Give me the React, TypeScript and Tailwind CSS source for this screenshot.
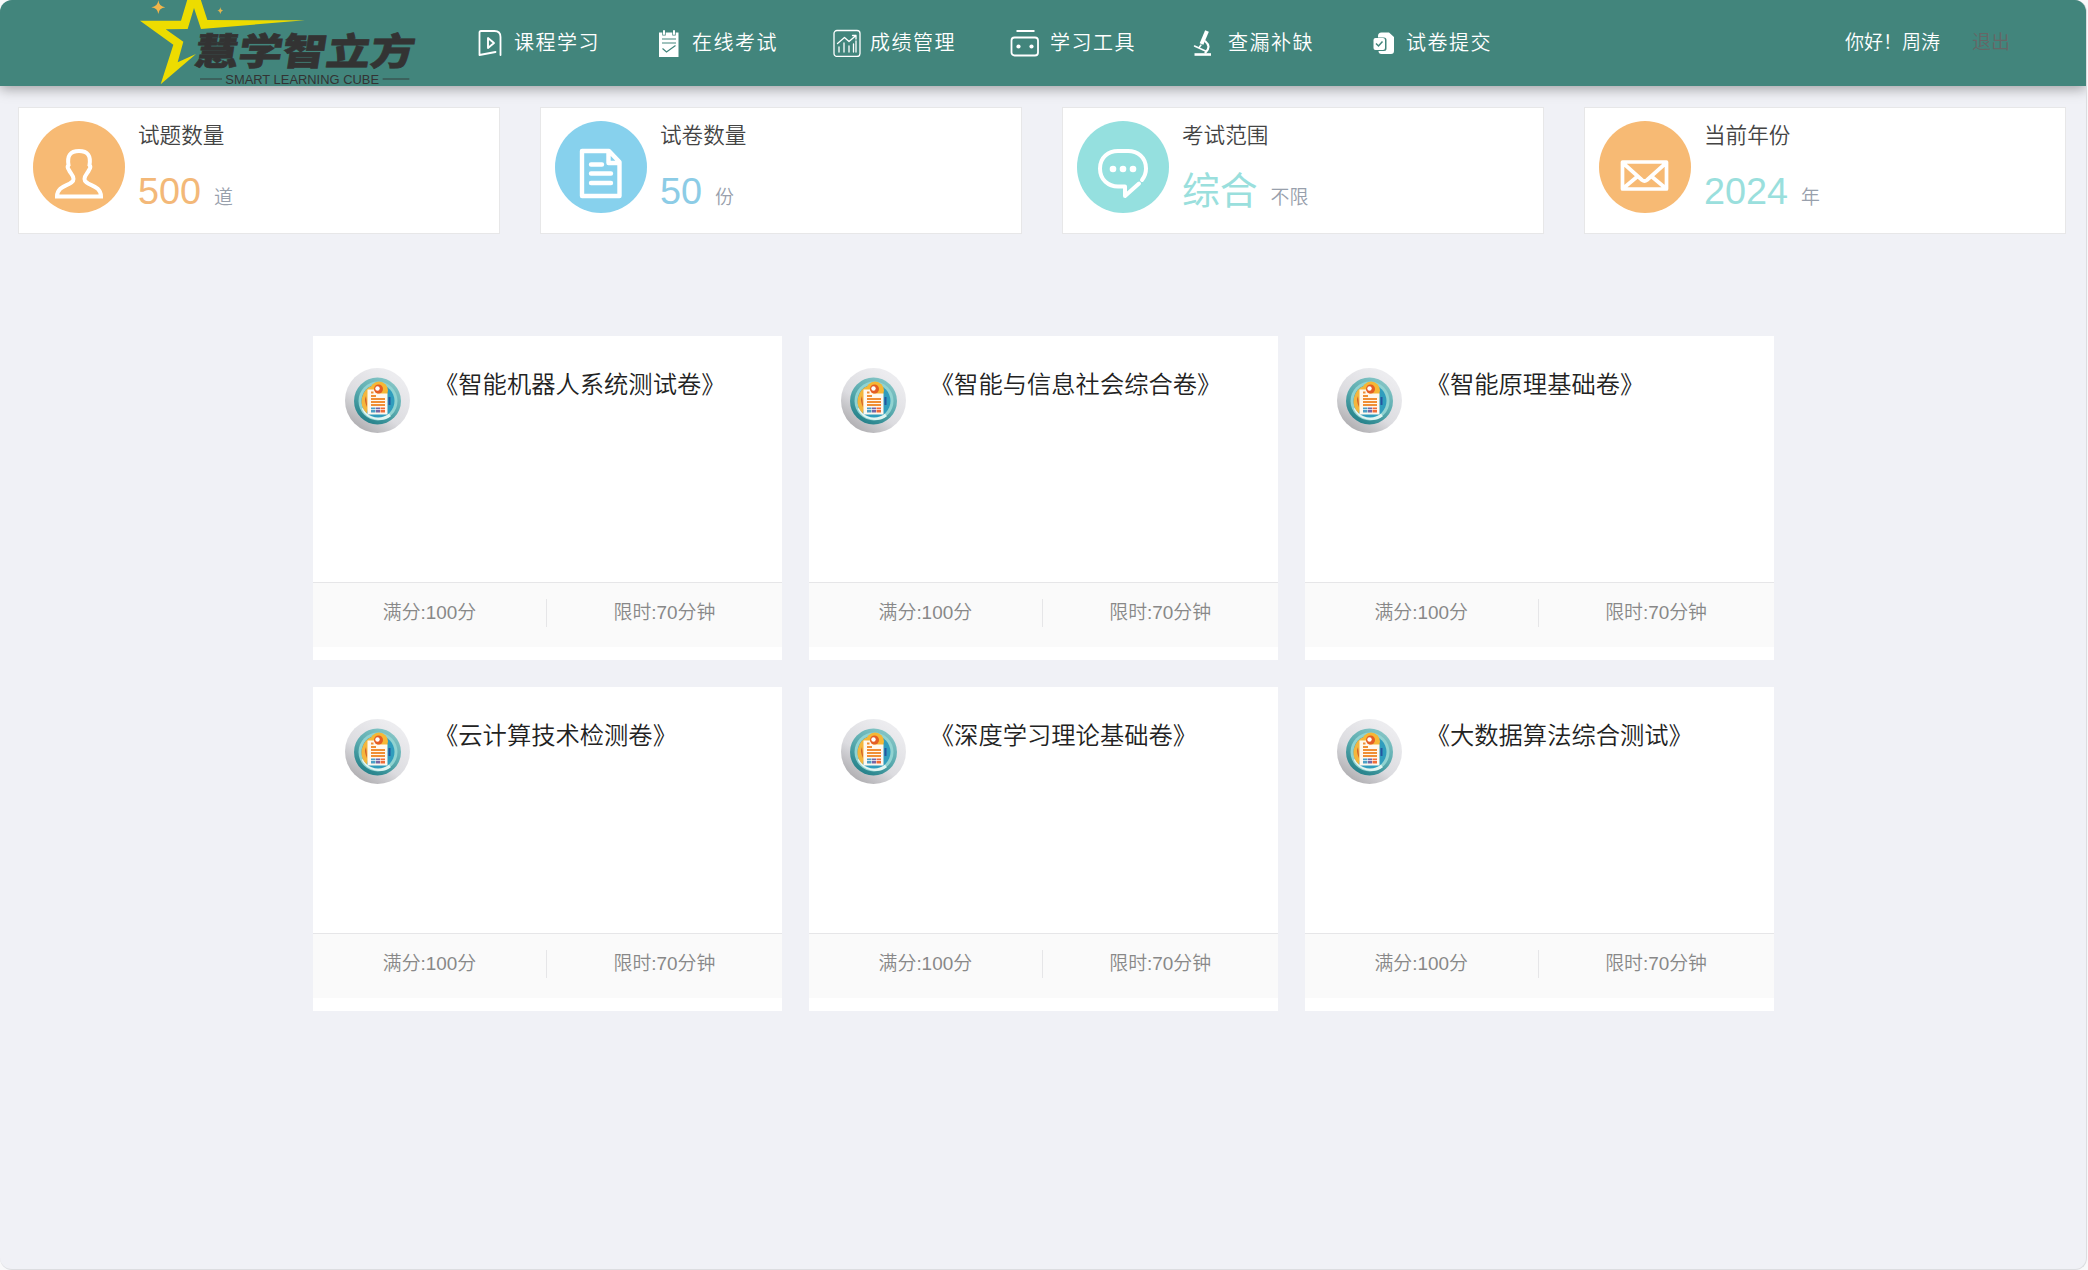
import React from "react";

const sans = "font-['Liberation_Sans','Noto_Sans_CJK_SC',sans-serif]";

function Logo() {
  return (
    <svg className="h-[86px] w-[320px] shrink-0" viewBox="0 0 960 258">
      <path
        fill="#eddc00"
        fillRule="evenodd"
        d="M60 62L183 62L204 -8L240 -8L262 60L555 61L243 87L222 24L203 87L137 88L190 125L173 187L228 162L122 253L160 134Z"
      />
      <path fill="#f3b54a" d="M115 1Q117 20 136 22Q117 24 115 42Q113 24 94 22Q113 20 115 1Z" />
      <path fill="#e3b54c" d="M301 21Q302 31 310 32Q302 33 301 43Q300 33 292 32Q300 31 301 21Z" />
      <text
        transform="translate(218 195) skewX(-9)"
        fontSize="112"
        fontWeight="900"
        fill="#333"
        stroke="#333"
        strokeWidth="2"
        textLength="660"
        lengthAdjust="spacingAndGlyphs"
        fontFamily="Noto Sans CJK SC, sans-serif"
      >
        慧学智立方
      </text>
      <path d="M240 237H306M788 237H868" stroke="#333" strokeWidth="2.5" />
      <text x="316" y="251" fontSize="41" fill="#333" textLength="461" lengthAdjust="spacingAndGlyphs" fontFamily="Liberation Sans, sans-serif">
        SMART LEARNING CUBE
      </text>
    </svg>
  );
}

const line = { fill: "none", stroke: "#fff", strokeLinecap: "round", strokeLinejoin: "round" } as const;

const icons = {
  course: (
    <svg className="size-[28px]" viewBox="0 0 28 28">
      <path {...line} strokeWidth="1.8" d="M23.5 26V8Q23.5 2 17.5 2H4Q2.5 2 2.5 3.5V26L18.5 23" />
      <path {...line} strokeWidth="1.9" d="M11 9V19L17 14Z" />
    </svg>
  ),
  exam: (
    <svg className="size-[28px]" viewBox="0 0 28 28">
      <path fill="#fff" d="M4 3.500H23.500V28H4Z" />
      <path stroke="#42857c" strokeWidth="3.4" d="M9 1V6.500M19 1V6.500" />
      <path {...line} strokeWidth="2" d="M9 2V5M19 2V5" />
      <path stroke="#42857c" strokeWidth="1.2" d="M7 10H21M7 14H21" />
      <path stroke="#42857c" strokeWidth="1.2" fill="none" d="M7.5 19.5L11.5 23L20.5 16.5" />
    </svg>
  ),
  score: (
    <svg className="size-[28px]" viewBox="0 0 28 28">
      <rect {...line} strokeWidth="1.3" x="1" y="1.5" width="26" height="26" rx="3" />
      <path {...line} strokeWidth="1.3" d="M4.5 14.5L11.5 8.5L16 12.5L23 6.5M19.5 6.5H23V10M6 18V23M11 14V23M16 17V23M20.5 15V23M23 12V23" />
    </svg>
  ),
  tools: (
    <svg className="size-[30px]" viewBox="0 0 30 30">
      <path stroke="#fff" strokeWidth="2" d="M6.5 3H24.5" />
      <rect {...line} strokeWidth="1.8" x="1.500" y="9.500" width="26.500" height="18" rx="3" />
      <circle cx="8.5" cy="18.500" r="2.1" fill="#fff" />
      <circle cx="21.5" cy="18.500" r="2.1" fill="#fff" />
    </svg>
  ),
  gaps: (
    <svg className="size-[28px]" viewBox="0 0 28 28">
      <path d="M16 2L10.5 15" stroke="#fff" strokeWidth="4" />
      <path {...line} strokeWidth="1.5" d="M3.5 17L14.5 22M10 16L8.5 18" />
      <path {...line} strokeWidth="2.2" d="M14.5 12.5Q20.5 17.5 14.5 23.5" />
      <path stroke="#fff" strokeWidth="2.6" d="M3.500 25.5H20" />
    </svg>
  ),
  submit: (
    <svg className="size-[28px]" viewBox="0 0 28 28">
      <path fill="#fff" d="M8 7Q8 3.5 11.5 3.5H19L24 8V22Q24 25 21 25H11.5Q8.5 25 8.5 22H14Q16.5 22 16.5 19.5V11Q16.5 8.5 14 8.5H8Z" />
      <rect fill="#fff" x="3.5" y="9" width="11.5" height="12" rx="2" />
      <path stroke="#42857c" strokeWidth="1.5" fill="none" d="M6 14.5L8.5 17L12.5 12.5" />
    </svg>
  ),
};

const nav = [
  { icon: icons.course, label: "课程学习", cls: "ml-[37px] w-[178px] gap-[9px]" },
  { icon: icons.exam, label: "在线考试", cls: "w-[178px] gap-[9px]" },
  { icon: icons.score, label: "成绩管理", cls: "w-[177px] gap-[9px]" },
  { icon: icons.tools, label: "学习工具", cls: "w-[181px] gap-[10px]" },
  { icon: icons.gaps, label: "查漏补缺", cls: "w-[179px] gap-[9px]" },
  { icon: icons.submit, label: "试卷提交", cls: "gap-[8px]" },
];

const glyph = { fill: "none", stroke: "#fff", strokeWidth: 4, strokeLinejoin: "round" } as const;

const stats = [
  {
    title: "试题数量", value: "500", unit: "道", bg: "bg-[#f7ba74]", fg: "text-[#f3b878]",
    icon: <path {...glyph} strokeLinejoin="miter" transform="translate(0 30)" d="M24 45.5C24 33 40.5 35 40.5 28C40.5 24 37 22 36 19C34.5 17 34.5 15 35.5 14C34 5 37 0 46 0C55 0 58 5 56.5 14C57.5 15 57.5 17 56 19C55 22 51.5 24 51.5 28C51.5 35 68 33 68 45.5Z" />,
  },
  {
    title: "试卷数量", value: "50", unit: "份", bg: "bg-[#87d1ed]", fg: "text-[#8ccce6]",
    icon: <path {...glyph} strokeLinecap="round" strokeWidth="4.4" d="M27 30H54L64.5 41V75H27ZM53.5 31V42H64M36 43.5H47M36 52.5H56M36 62H56" />,
  },
  {
    title: "考试范围", value: "综合", unit: "不限", bg: "bg-[#95e0df]", fg: "text-[#9adfdd]",
    icon: (
      <>
        <path {...glyph} strokeLinecap="round" d="M65 59Q69 54 69 47.5C69 36 60.5 30 51 30H41C31.5 30 23 36 23 47.5C23 59 31.5 65.5 41 65.5H48V75L62 62.5" />
        <g fill="#fff"><circle cx="36" cy="48" r="3.3" /><circle cx="46" cy="48" r="3.3" /><circle cx="56" cy="48" r="3.3" /></g>
      </>
    ),
  },
  {
    title: "当前年份", value: "2024", unit: "年", bg: "bg-[#f7ba74]", fg: "text-[#9adfdd]",
    icon: <path {...glyph} strokeWidth="3.7" d="M23.5 41H67.5V68H23.5ZM24 42L43 59Q45.5 61 48 59L67 42M24 67.5L39 55M67 67.5L52 55" />,
  },
];

const papers = [
  "《智能机器人系统测试卷》",
  "《智能与信息社会综合卷》",
  "《智能原理基础卷》",
  "《云计算技术检测卷》",
  "《深度学习理论基础卷》",
  "《大数据算法综合测试》",
];

function PaperIcon({ id }: { id: string }) {
  const rim = `rim-${id}`;
  const teal = `teal-${id}`;
  return (
    <svg className="size-[65px] shrink-0" viewBox="0 0 65 65">
      <defs>
        <linearGradient id={rim} x1="0.8" y1="0.15" x2="0.25" y2="0.95">
          <stop offset="0" stopColor="#ececef" />
          <stop offset="0.6" stopColor="#dcdce0" />
          <stop offset="1" stopColor="#b0afb2" />
        </linearGradient>
        <linearGradient id={teal} x1="0.8" y1="0.1" x2="0.3" y2="1">
          <stop offset="0" stopColor="#83c4c5" />
          <stop offset="0.5" stopColor="#58aaae" />
          <stop offset="1" stopColor="#227f88" />
        </linearGradient>
      </defs>
      <circle cx="32.5" cy="32.5" r="32.5" fill={`url(#${rim})`} />
      <circle cx="32.5" cy="33" r="23.5" fill={`url(#${teal})`} />
      <circle cx="33" cy="33" r="19.5" fill="#91d3d1" />
      <path d="M18 40A18 18 0 0 0 45 47" stroke="#e2f5f1" strokeWidth="3" fill="none" />
      <circle cx="33" cy="33" r="16.5" fill="#2f9dbd" />
      <path d="M28 17.5A16.5 16.5 0 0 0 22 45.5Z" fill="#f4b63c" />
      <path d="M21 28Q19 33 22 39Z" fill="#cf4e25" />
      <path d="M44.5 29V37" stroke="#2456a0" strokeWidth="2" />
      <circle cx="34" cy="22.5" r="9" fill="#f6b735" />
      <path d="M22.5 21.5H29L32 25.5H42.5V46.5H22.5Z" fill="#fff8ee" />
      <circle cx="33.5" cy="21" r="4.5" fill="#e45d24" />
      <circle cx="32.5" cy="20.5" r="2.2" fill="#fff" />
      <path d="M26 24.5H28.5M26 28H31M26 31H40M26 34H40M26 37H40" stroke="#f08f35" strokeWidth="2" />
      <path d="M26 42H30.5" stroke="#4b9fc6" strokeWidth="5" />
      <path d="M31 42H35" stroke="#7666a5" strokeWidth="5" />
      <path d="M35.5 42H40" stroke="#ef6c38" strokeWidth="5" />
      <path d="M25 41.5H41" stroke="#fff" strokeWidth="0.7" />
    </svg>
  );
}

export default function App() {
  return (
    <div className="h-[1270px] w-[2088px] bg-[#f9f9fa]">
      <div className={`${sans} flex h-[1270px] w-[2087px] flex-col overflow-hidden rounded-xl border-r border-b border-[#dcdde0] bg-[#f0f1f6]`}>
        <header className="flex h-[86px] shrink-0 items-center bg-[#42857c] pl-[120px] shadow-[0_3px_12px_rgba(0,0,0,0.34)]">
          <Logo />
          <nav className="flex items-center text-white">
            {nav.map((n) => (
              <a key={n.label} className={`flex shrink-0 items-center ${n.cls}`}>
                {n.icon}
                <span className="text-[20px] leading-[30px] font-[350] tracking-[1.5px] whitespace-nowrap">{n.label}</span>
              </a>
            ))}
          </nav>
          <div className="mr-[76px] ml-auto flex gap-[32px] text-[19px] leading-[30px] font-[350] whitespace-nowrap">
            <span className="text-white">你好！周涛</span>
            <a className="text-[#666]">退出</a>
          </div>
        </header>

        <section className="mt-[21px] ml-[18px] flex gap-[40px]">
          {stats.map((s) => (
            <div key={s.title} className="flex h-[127px] w-[482px] border border-[#e7e7e8] bg-white pt-[13px] pl-[14px]">
              <div className={`size-[92px] rounded-full ${s.bg}`}>
                <svg className="size-[92px]" viewBox="0 0 92 92">{s.icon}</svg>
              </div>
              <div className="ml-[13px] flex flex-col">
                <div className="h-[30px] text-[21.6px] leading-[30px] font-[350] text-[#444]">{s.title}</div>
                <div className="mt-[12px] flex items-baseline gap-[13px]">
                  <span className={`text-[37.8px] leading-[56px] ${s.fg}`}>{s.value}</span>
                  <span className="text-[18.9px] font-[350] text-[#98a0ac]">{s.unit}</span>
                </div>
              </div>
            </div>
          ))}
        </section>

        <main className="mt-[102px] ml-[313px] grid w-[1460.5px] grid-cols-3 gap-[27px]">
          {papers.map((title, i) => (
            <article key={title} className="flex h-[324px] flex-col bg-white">
              <div className="flex h-[246px] shrink-0 gap-[24px] pt-[32px] pl-[32px]">
                <PaperIcon id={String(i)} />
                <h2 className="text-[24.3px] leading-[34px] font-[350] text-[#222]">{title}</h2>
              </div>
              <div className="flex h-[65px] border-t border-[#e6e6e8] bg-[#fafafa] pt-[16px] text-center text-[18.9px] leading-[28px] font-[350] text-[#888]">
                <div className="h-[28px] w-[234px] border-r border-[#e6e6e8]">满分:100分</div>
                <div className="h-[28px] flex-1">限时:70分钟</div>
              </div>
            </article>
          ))}
        </main>
      </div>
    </div>
  );
}
